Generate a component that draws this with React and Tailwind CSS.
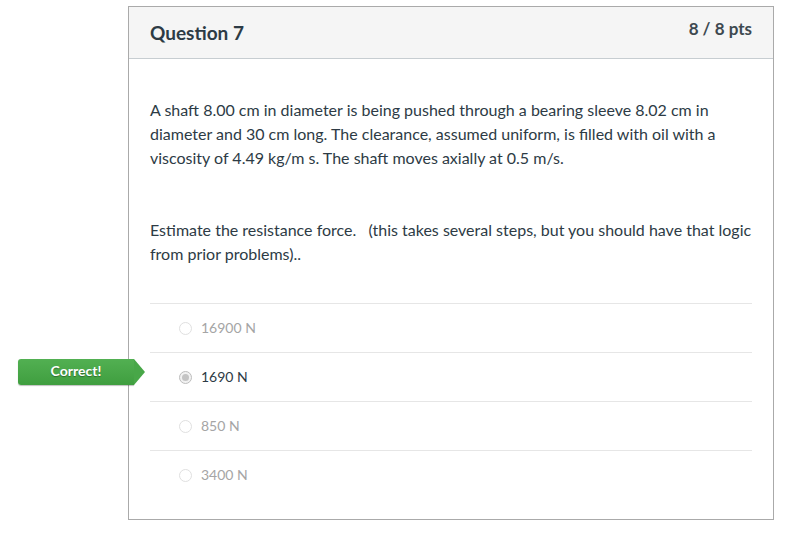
import React from "react";

const answers = [
  { label: "16900 N", selected: false },
  { label: "1690 N", selected: true, correct: true },
  { label: "850 N", selected: false },
  { label: "3400 N", selected: false },
];

const Radio = ({ checked }) => (
  <span
    className={`flex h-[13px] w-[13px] items-center justify-center rounded-full border ${
      checked ? "border-[#bdbdbd] bg-[#f2f2f2]" : "border-[#e0e0e0] bg-white"
    }`}
  >
    {checked && <span className="h-[7px] w-[7px] rounded-full bg-[#c4c4c4]"></span>}
  </span>
);

const CorrectBadge = () => (
  <div className="absolute left-[-132px] top-[6px] flex h-[26px] items-center">
    <div className="flex h-[26px] w-[116px] items-center justify-center rounded-l-[3px] bg-gradient-to-b from-[#52b052] to-[#3f9e3f] pb-[2px] shadow-[0_1px_1px_rgba(0,0,0,0.25)]">
      <span className="text-[14px] font-bold text-white [text-shadow:0_1px_1px_rgba(0,0,0,0.35)]">
        Correct!
      </span>
    </div>
    <div className="h-0 w-0 border-y-[13px] border-l-[11px] border-y-transparent border-l-[#48a748]"></div>
  </div>
);

export default function App() {
  return (
    <div
      className="min-h-[533px] w-[786px] bg-white pt-[6px]"
      style={{ fontFamily: "Lato, 'Open Sans', sans-serif" }}
    >
      <div className="ml-[128px] w-[646px] border border-[#aaaaaa] bg-white">
        {/* Header */}
        <div className="flex h-[52px] items-start justify-between border-b border-[#c7cdd1] bg-[#f5f5f5] px-[21px]">
          <h2 className="mt-[12px] text-[19px] font-bold text-[#2d3b45]">Question 7</h2>
          <span className="mt-[9px] text-[17px] font-bold text-[#3d4950]">8 / 8 pts</span>
        </div>

        {/* Body */}
        <div className="px-[21px] pb-[20px] pt-[39px] text-[16px] leading-[24px] text-[#2d3b45]">
          <p>
            A shaft 8.00 cm in diameter is being pushed through a bearing sleeve 8.02 cm in
            diameter and 30 cm long. The clearance, assumed uniform, is filled with oil with a
            viscosity of 4.49 kg/m s. The shaft moves axially at 0.5 m/s.
          </p>
          <p className="mt-[48px]">
            Estimate the resistance force.&nbsp;&nbsp; (this takes several steps, but you should
            have that logic from prior problems)..
          </p>

          {/* Answers */}
          <div className="mt-[37px]">
            {answers.map((a, i) => (
              <div
                key={i}
                className="relative flex h-[49px] items-center border-t border-[#e6e6e6] pl-[29px]"
              >
                {a.correct && <CorrectBadge />}
                <Radio checked={a.selected} />
                <span
                  className={`ml-[9px] text-[14px] ${
                    a.selected ? "text-[#2d3b45]" : "text-[#a5a5a5]"
                  }`}
                >
                  {a.label}
                </span>
              </div>
            ))}
          </div>
        </div>
      </div>
    </div>
  );
}
